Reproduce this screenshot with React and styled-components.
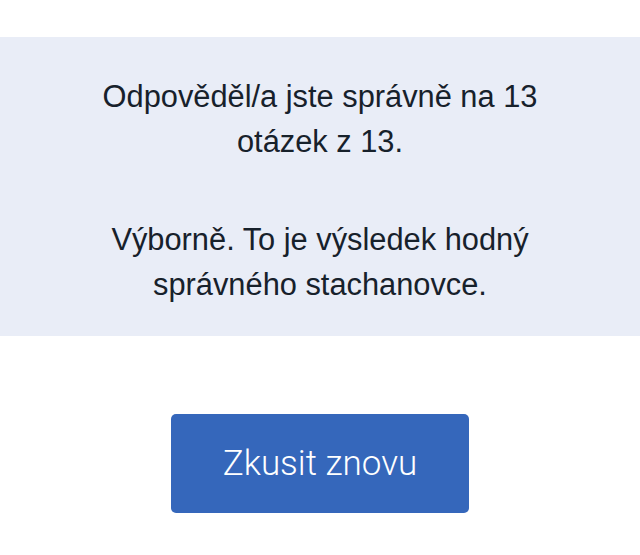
import React from "react";
import styled, { createGlobalStyle } from "styled-components";

const Global = createGlobalStyle`
  html, body { margin: 0; padding: 0; background: #ffffff; }
  body { font-family: "Liberation Sans", Arial, sans-serif; }
`;

const Page = styled.div`
  display: flex;
  flex-direction: column;
  align-items: center;
  padding-top: 37px;
`;

const Result = styled.section`
  align-self: stretch;
  background: #e9edf7;
  box-sizing: border-box;
  height: 299px;
  padding: 37px 0 0;
  display: flex;
  flex-direction: column;
  align-items: center;
`;

const Message = styled.p`
  margin: 0 0 53px;
  max-width: 480px;
  text-align: center;
  font-family: "Liberation Sans", Arial, sans-serif;
  font-size: 30.8px;
  line-height: 45px;
  color: #17212b;
`;

const RetryButton = styled.button`
  margin-top: 78px;
  width: 298px;
  height: 99px;
  border: none;
  border-radius: 5px;
  background: #3567bb;
  color: #ffffff;
  font-family: Roboto, "Noto Sans", sans-serif;
  font-size: 35px;
  font-weight: 300;
  cursor: pointer;
`;

export default function App() {
  return (
    <>
      <Global />
      <Page>
        <Result>
          <Message>Odpověděl/a jste správně na 13 otázek z 13.</Message>
          <Message>Výborně. To je výsledek hodný správného stachanovce.</Message>
        </Result>
        <RetryButton>Zkusit znovu</RetryButton>
      </Page>
    </>
  );
}
